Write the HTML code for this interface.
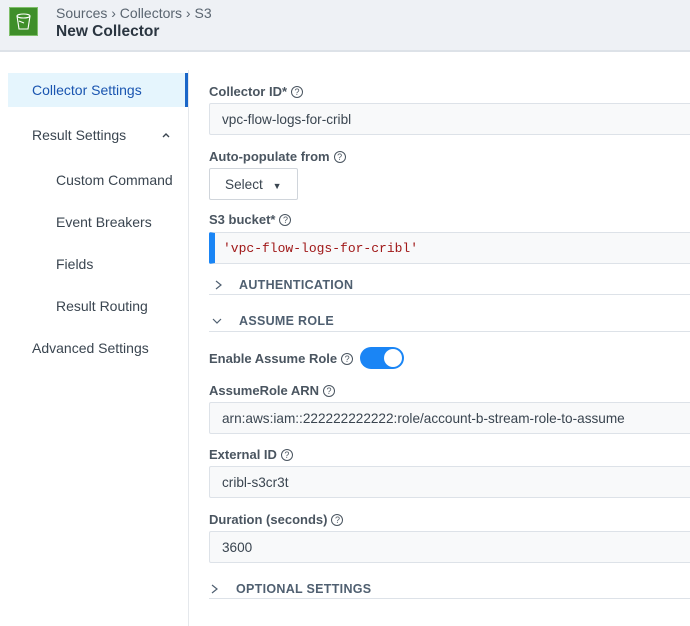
<!DOCTYPE html>
<html><head><style>
*{box-sizing:border-box;margin:0;padding:0}
body{width:690px;height:626px;overflow:hidden;background:#fff;font-family:"Liberation Sans",sans-serif;color:#3a4550;position:relative}
.a{position:absolute;white-space:nowrap}
.hdr{left:0;top:0;width:690px;height:52px;background:#eef1f5;border-bottom:2px solid #dde2e8}
.lbl{font-size:13px;font-weight:bold;color:#4a5560}
.q{display:inline-block;width:12px;height:12px;border:1px solid #4a5560;border-radius:50%;font-size:9px;text-align:center;line-height:10px;font-weight:normal;margin-left:4px;vertical-align:1px}
.inp{left:209px;width:490px;height:32px;border:1px solid #dde2e8;background:#f8f9fa;border-radius:2px;font-size:13.6px;padding:0 12px;line-height:31px;color:#3a4550}
.nav{font-size:14px;color:#3a4550}
.sec{font-size:12.5px;font-weight:bold;color:#4f5f70;letter-spacing:.3px}
.line{left:209px;width:481px;height:1px;background:#dde2e8}
</style></head><body>
<div class="a hdr"></div>
<div class="a" style="left:9px;top:7px;width:29px;height:29px;background:#3f8f2a;border:1px solid #7fbf6a">
<svg width="27" height="27" viewBox="0 0 27 27"><path d="M7 8 L9 21 H18 L20 8" fill="none" stroke="#fff" stroke-width="1.1"/><ellipse cx="13.5" cy="8" rx="6.5" ry="2" fill="none" stroke="#fff" stroke-width="1.1"/><path d="M9 13 L14 15" stroke="#fff" stroke-width="1"/></svg></div>
<div class="a" style="left:56px;top:5px;font-size:14px;color:#5a6570">Sources › Collectors › S3</div>
<div class="a" style="left:56px;top:23px;font-size:15.5px;font-weight:bold;color:#2a3540">New Collector</div>

<div class="a" style="left:188px;top:70px;width:1px;height:556px;background:#e5e8ec"></div>
<div class="a" style="left:8px;top:73px;width:180px;height:34px;background:#e5f5fd;border-right:3px solid #1a66c8"></div>
<div class="a nav" style="left:32px;top:82px;color:#1a55b0">Collector Settings</div>
<div class="a nav" style="left:32px;top:127px">Result Settings</div>
<svg class="a" style="left:161px;top:131px" width="10" height="8"><path d="M2 6 L5 3 L8 6" fill="none" stroke="#3a4550" stroke-width="1.4"/></svg>
<div class="a nav" style="left:56px;top:172px">Custom Command</div>
<div class="a nav" style="left:56px;top:214px">Event Breakers</div>
<div class="a nav" style="left:56px;top:256px">Fields</div>
<div class="a nav" style="left:56px;top:298px">Result Routing</div>
<div class="a nav" style="left:32px;top:340px">Advanced Settings</div>

<div class="a lbl" style="left:209px;top:84px">Collector ID*<span class="q">?</span></div>
<div class="a inp" style="top:103px">vpc-flow-logs-for-cribl</div>
<div class="a lbl" style="left:209px;top:149px">Auto-populate from<span class="q">?</span></div>
<div class="a" style="left:209px;top:168px;width:89px;height:32px;border:1px solid #d0d5db;border-radius:2px;font-size:13.6px;line-height:31px;padding-left:15px">Select <span style="font-size:9px;margin-left:6px">▼</span></div>
<div class="a lbl" style="left:209px;top:212px">S3 bucket*<span class="q">?</span></div>
<div class="a inp" style="top:232px;border-left:6px solid #1a85f5;font-family:'Liberation Mono',monospace;font-size:13px;color:#a01818;padding-left:8px">'vpc-flow-logs-for-cribl'</div>
<svg class="a" style="left:213px;top:279px" width="10" height="12"><path d="M3 2 L8 6 L3 10" fill="none" stroke="#4f5f70" stroke-width="1.2"/></svg>
<div class="a sec" style="left:239px;top:278px">AUTHENTICATION</div>
<div class="a line" style="top:294px"></div>
<svg class="a" style="left:211px;top:316px" width="12" height="10"><path d="M2 3 L6 7 L10 3" fill="none" stroke="#4f5f70" stroke-width="1.2"/></svg>
<div class="a sec" style="left:239px;top:314px">ASSUME ROLE</div>
<div class="a line" style="top:331px"></div>
<div class="a lbl" style="left:209px;top:351px">Enable Assume Role<span class="q">?</span></div>
<div class="a" style="left:360px;top:347px;width:44px;height:22px;border-radius:11px;background:#1a85f5"></div>
<div class="a" style="left:384px;top:349px;width:18px;height:18px;border-radius:50%;background:#fff"></div>
<div class="a lbl" style="left:209px;top:383px">AssumeRole ARN<span class="q">?</span></div>
<div class="a inp" style="top:402px">arn:aws:iam::222222222222:role/account-b-stream-role-to-assume</div>
<div class="a lbl" style="left:209px;top:447px">External ID<span class="q">?</span></div>
<div class="a inp" style="top:466px">cribl-s3cr3t</div>
<div class="a lbl" style="left:209px;top:512px">Duration (seconds)<span class="q">?</span></div>
<div class="a inp" style="top:531px">3600</div>
<svg class="a" style="left:209px;top:583px" width="10" height="12"><path d="M3 2 L8 6 L3 10" fill="none" stroke="#4f5f70" stroke-width="1.2"/></svg>
<div class="a sec" style="left:236px;top:582px">OPTIONAL SETTINGS</div>
<div class="a line" style="top:598px"></div>
</body></html>
